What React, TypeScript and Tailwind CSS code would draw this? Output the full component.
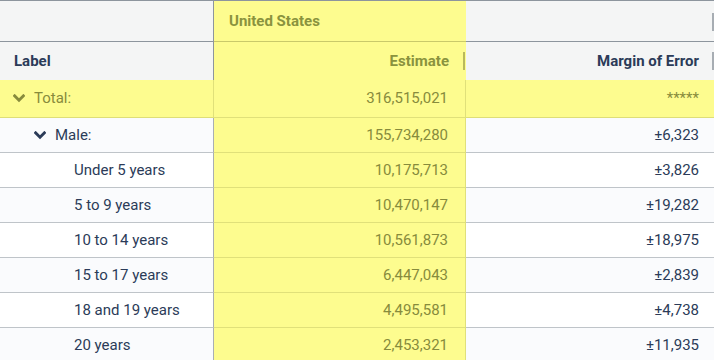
const ROWS = [
  { label: 'Total:', est: '316,515,021', moe: '*****', level: 0, toggle: true, total: true },
  { label: 'Male:', est: '155,734,280', moe: '±6,323', level: 1, toggle: true },
  { label: 'Under 5 years', est: '10,175,713', moe: '±3,826', level: 2 },
  { label: '5 to 9 years', est: '10,470,147', moe: '±19,282', level: 2 },
  { label: '10 to 14 years', est: '10,561,873', moe: '±18,975', level: 2 },
  { label: '15 to 17 years', est: '6,447,043', moe: '±2,839', level: 2 },
  { label: '18 and 19 years', est: '4,495,581', moe: '±4,738', level: 2 },
  { label: '20 years', est: '2,453,321', moe: '±11,935', level: 2 },
];

function Chevron({ className }: { className?: string }) {
  return (
    <svg width="12" height="9" viewBox="0 0 12 9" className={className} fill="none">
      <polyline points="1.6,1.8 6,6.2 10.4,1.8" stroke="currentColor" strokeWidth="2.8" strokeLinecap="square" />
    </svg>
  );
}

export default function App() {
  return (
    <div className="w-[714px] h-[360px] overflow-hidden bg-white text-[#2b3b58]" style={{ fontFamily: 'Roboto, "Liberation Sans", sans-serif' }}>
      {/* Header: group row */}
      <div className="flex h-[42px] border-t border-[#8d959d]">
        <div className="w-[214px] bg-[#f4f5f5] border-r border-[#8d959d] border-b" />
        <div className="w-[252px] bg-[#fdfc8f] border-b border-[#c9c96a] flex items-center pl-[15px] text-[15px] font-bold text-[#8a933e]">
          United States
        </div>
        <div className="flex-1 bg-[#f4f5f5] border-b border-[#8d959d] relative">
          <div className="absolute right-0 top-[12px] w-[2px] h-[18px] bg-[#a7adb3]" />
        </div>
      </div>

      {/* Header: column names */}
      <div className="flex h-[38px] text-[15px] font-bold">
        <div className="w-[214px] bg-[#f4f5f5] border-r border-[#8d959d] flex items-center pl-[14px]">Label</div>
        <div className="w-[252px] bg-[#fdfc8f] flex items-center justify-end pr-[17px] relative text-[#8a933e]">
          Estimate
          <div className="absolute right-[1px] top-[10px] w-[2px] h-[18px] bg-[#b9b95c]" />
        </div>
        <div className="flex-1 bg-[#f4f5f5] flex items-center justify-end pr-[15px] relative">
          Margin of Error
          <div className="absolute right-0 top-[10px] w-[2px] h-[18px] bg-[#a7adb3]" />
        </div>
      </div>

      {/* Body */}
      {ROWS.map((r, i) => {
        const bg = r.total ? 'bg-[#fdfc8f]' : i % 2 === 1 ? 'bg-[#fafbfd]' : 'bg-white';
        const text = r.total ? 'text-[#878b3c]' : 'text-[#2b3b58]';
        return (
          <div key={r.label} className={`flex text-[15px] ${r.total ? 'h-[38px]' : 'h-[35px]'} ${text}`}>
            <div
              className={`w-[214px] ${bg} border-r ${r.total ? 'border-[#e0e07a] border-b-[#dede78]' : 'border-[#a9aeb3] border-b-[#bfc4c9]'} border-b flex items-center ${
                r.level === 0 ? 'pl-[13px]' : r.level === 1 ? 'pl-[34px]' : 'pl-[74px]'
              }`}
            >
              {r.toggle && (
                <Chevron className={`mr-[9px] ${r.total ? 'text-[#878b3c]' : 'text-[#2b3b58]'}`} />
              )}
              {r.label}
            </div>
            <div className="w-[252px] bg-[#fdfc8f] border-r border-[#e0e07a] border-b border-b-[#e0e07a] flex items-center justify-end pr-[17px] text-[#878b3c]">
              {r.est}
            </div>
            <div className={`flex-1 ${bg} border-b ${r.total ? 'border-[#dede78]' : 'border-[#bfc4c9]'} flex items-center justify-end pr-[15px]`}>
              {r.moe}
            </div>
          </div>
        );
      })}
    </div>
  );
}
